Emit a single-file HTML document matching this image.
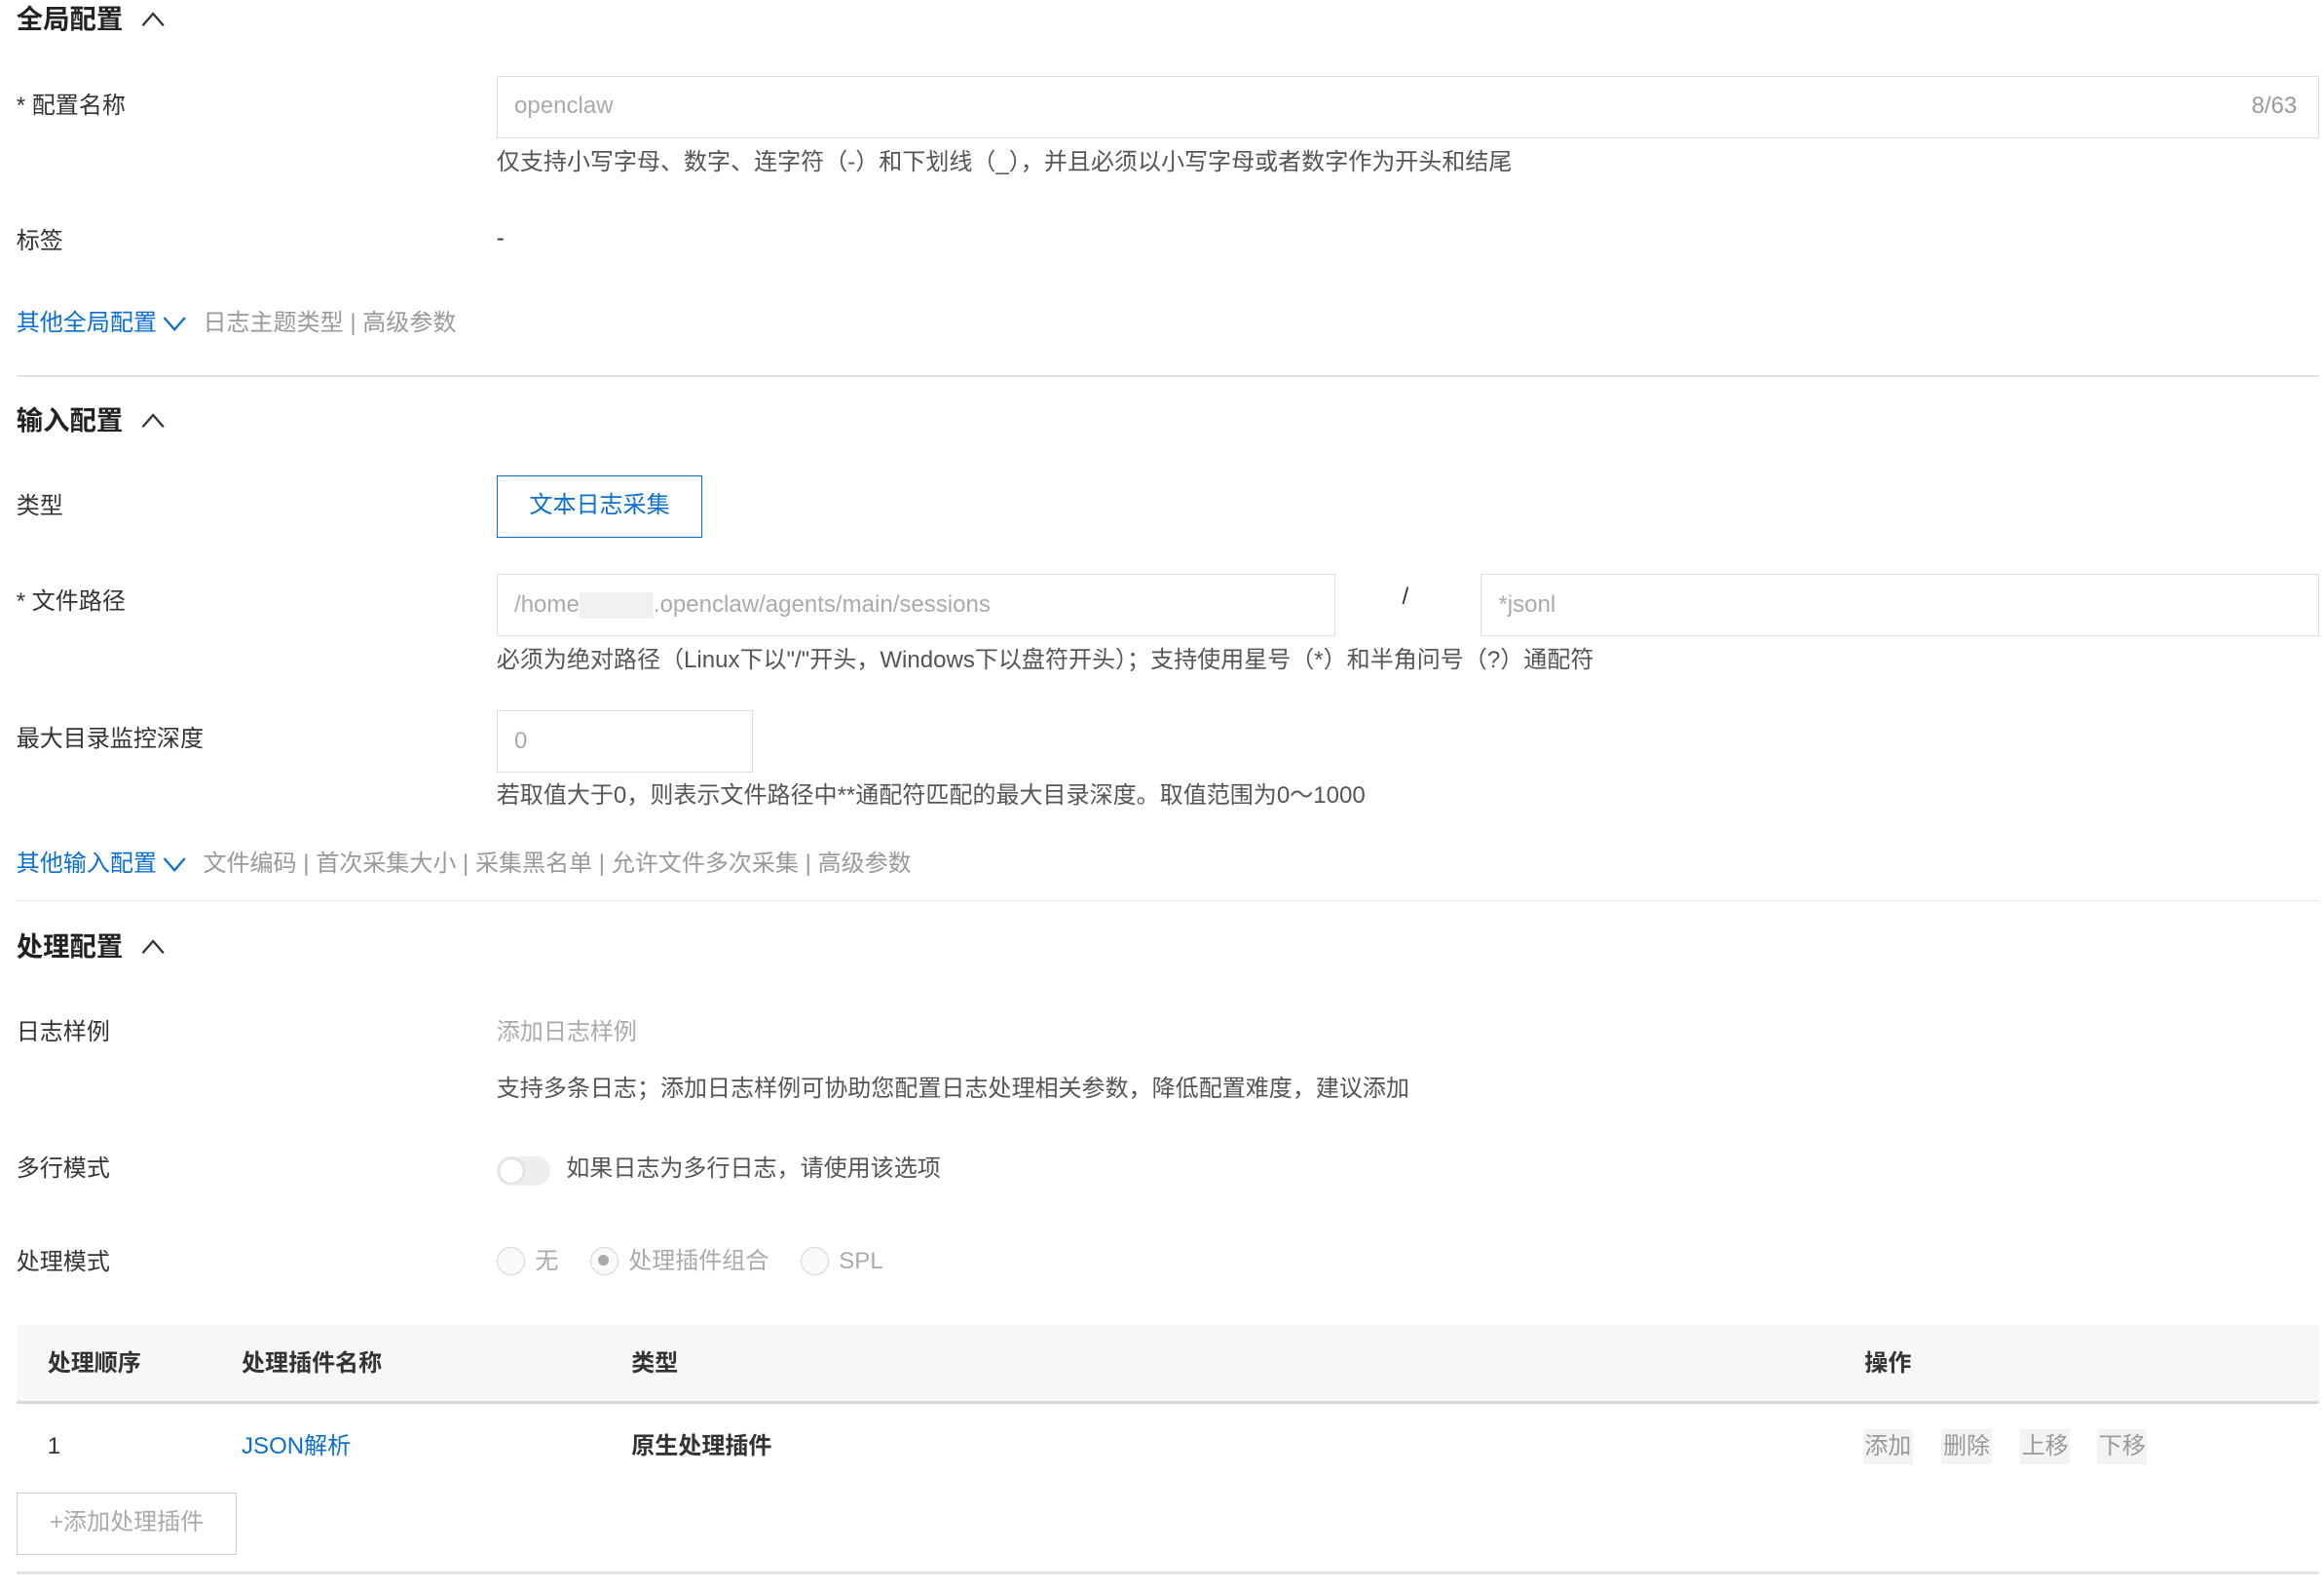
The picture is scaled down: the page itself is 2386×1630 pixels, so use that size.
<!DOCTYPE html>
<html><head><meta charset="utf-8"><style>
html,body{margin:0;padding:0;background:#fff;width:2386px;height:1630px;overflow:hidden}
#w{position:absolute;left:0;top:0;width:1568px;height:1071px;zoom:1.5217;font-family:"Liberation Sans","Noto Sans CJK SC",sans-serif;color:#333;font-size:15.8px}
.a{position:absolute;white-space:nowrap;line-height:20px}
.h{font-size:18px;font-weight:600;color:#222}
.hint{color:#555}
.g{color:#999}
.b{color:#0a6fd0}
.box{position:absolute;border:1px solid #ddd;box-sizing:border-box}
.hr{position:absolute;left:11px;width:1554px;height:1px;background:#e3e3e3}
.rad{position:absolute;width:19px;height:19px;border:1px solid #d5d5d5;border-radius:50%;box-sizing:border-box;background:#fafafa}
.op{position:absolute;top:964px;height:24px;line-height:24px;background:#f3f3f3;color:#999;padding:0 1px}
svg{position:absolute}
</style></head><body><div id="w">
<div class="a h" style="left:11px;top:3px">全局配置</div>
<svg style="left:95px;top:7px" width="16" height="12"><path d="M1 10 L8 2 L15 10" fill="none" stroke="#333" stroke-width="1.5"/></svg>
<div class="a" style="left:11px;top:62px">* 配置名称</div>
<div class="box" style="left:335px;top:51px;width:1230px;height:42px"></div>
<div class="a g" style="left:347px;top:62px;color:#aaa">openclaw</div>
<div class="a g" style="left:1519px;top:62px">8/63</div>
<div class="a hint" style="left:335px;top:100px">仅支持小写字母、数字、连字符（-）和下划线（_），并且必须以小写字母或者数字作为开头和结尾</div>
<div class="a" style="left:11px;top:153px">标签</div>
<div class="a" style="left:335px;top:151px">-</div>
<div class="a b" style="left:11px;top:208px">其他全局配置</div>
<svg style="left:110px;top:212px" width="16" height="12"><path d="M1 2 L8 10 L15 2" fill="none" stroke="#0a6fd0" stroke-width="1.5"/></svg>
<div class="a g" style="left:137px;top:208px">日志主题类型 | 高级参数</div>
<div class="hr" style="top:253px"></div>
<div class="a h" style="left:11px;top:274px">输入配置</div>
<svg style="left:95px;top:278px" width="16" height="12"><path d="M1 10 L8 2 L15 10" fill="none" stroke="#333" stroke-width="1.5"/></svg>
<div class="a" style="left:11px;top:332px">类型</div>
<div class="box b" style="left:335px;top:321px;width:139px;height:42px;border-color:#0a6fd0;text-align:center;line-height:40px">文本日志采集</div>
<div class="a" style="left:11px;top:396px">* 文件路径</div>
<div class="box" style="left:335px;top:387px;width:566px;height:42px"></div>
<div class="a" style="left:347px;top:398px;color:#aaa">/home<span style="display:inline-block;width:50px;height:18px;background:#f1f1f1;vertical-align:middle"></span>.openclaw/agents/main/sessions</div>
<div class="a" style="left:946px;top:393px">/</div>
<div class="box" style="left:999px;top:387px;width:566px;height:42px"></div>
<div class="a" style="left:1011px;top:398px;color:#aaa">*jsonl</div>
<div class="a hint" style="left:335px;top:436px">必须为绝对路径（Linux下以"/"开头，Windows下以盘符开头）；支持使用星号（*）和半角问号（?）通配符</div>
<div class="a" style="left:11px;top:489px">最大目录监控深度</div>
<div class="box" style="left:335px;top:479px;width:173px;height:42px"></div>
<div class="a" style="left:347px;top:490px;color:#aaa">0</div>
<div class="a hint" style="left:335px;top:527px">若取值大于0，则表示文件路径中**通配符匹配的最大目录深度。取值范围为0～1000</div>
<div class="a b" style="left:11px;top:573px">其他输入配置</div>
<svg style="left:110px;top:577px" width="16" height="12"><path d="M1 2 L8 10 L15 2" fill="none" stroke="#0a6fd0" stroke-width="1.5"/></svg>
<div class="a g" style="left:137px;top:573px">文件编码 | 首次采集大小 | 采集黑名单 | 允许文件多次采集 | 高级参数</div>
<div class="hr" style="top:607px"></div>
<div class="a h" style="left:11px;top:629px">处理配置</div>
<svg style="left:95px;top:633px" width="16" height="12"><path d="M1 10 L8 2 L15 10" fill="none" stroke="#333" stroke-width="1.5"/></svg>
<div class="a" style="left:11px;top:687px">日志样例</div>
<div class="a" style="left:335px;top:687px;color:#aaa">添加日志样例</div>
<div class="a hint" style="left:335px;top:725px">支持多条日志；添加日志样例可协助您配置日志处理相关参数，降低配置难度，建议添加</div>
<div class="a" style="left:11px;top:779px">多行模式</div>
<div style="position:absolute;left:335px;top:780px;width:36px;height:20px;border-radius:10px;background:#eee"><div style="position:absolute;left:2px;top:2px;width:16px;height:16px;border-radius:50%;background:#fff;box-shadow:0 0 2px #bbb"></div></div>
<div class="a hint" style="left:382px;top:779px">如果日志为多行日志，请使用该选项</div>
<div class="a" style="left:11px;top:842px">处理模式</div>
<div class="rad" style="left:335px;top:841px"></div><div class="a" style="left:361px;top:841px;color:#aaa">无</div>
<div class="rad" style="left:398px;top:841px"><div style="position:absolute;left:5px;top:5px;width:7px;height:7px;border-radius:50%;background:#aaa"></div></div><div class="a" style="left:424px;top:841px;color:#aaa">处理插件组合</div>
<div class="rad" style="left:540px;top:841px"></div><div class="a" style="left:566px;top:841px;color:#aaa">SPL</div>
<div style="position:absolute;left:11px;top:894px;width:1554px;height:51px;background:#f7f7f7;border-bottom:2px solid #d8d8d8"></div>
<div class="a" style="left:32px;top:910px;font-weight:600">处理顺序</div>
<div class="a" style="left:163px;top:910px;font-weight:600">处理插件名称</div>
<div class="a" style="left:426px;top:910px;font-weight:600">类型</div>
<div class="a" style="left:1258px;top:910px;font-weight:600">操作</div>
<div class="a" style="left:32px;top:966px">1</div>
<div class="a b" style="left:163px;top:966px">JSON解析</div>
<div class="a" style="left:426px;top:966px;font-weight:600">原生处理插件</div>
<div class="op" style="left:1257px">添加</div><div class="op" style="left:1310px">删除</div><div class="op" style="left:1363px">上移</div><div class="op" style="left:1415px">下移</div>
<div class="box" style="left:11px;top:1007px;width:149px;height:42px;border-color:#ccc;text-align:center;line-height:40px;color:#aaa">+添加处理插件</div>
<div class="hr" style="top:1060px;height:2px"></div>
</div></body></html>
